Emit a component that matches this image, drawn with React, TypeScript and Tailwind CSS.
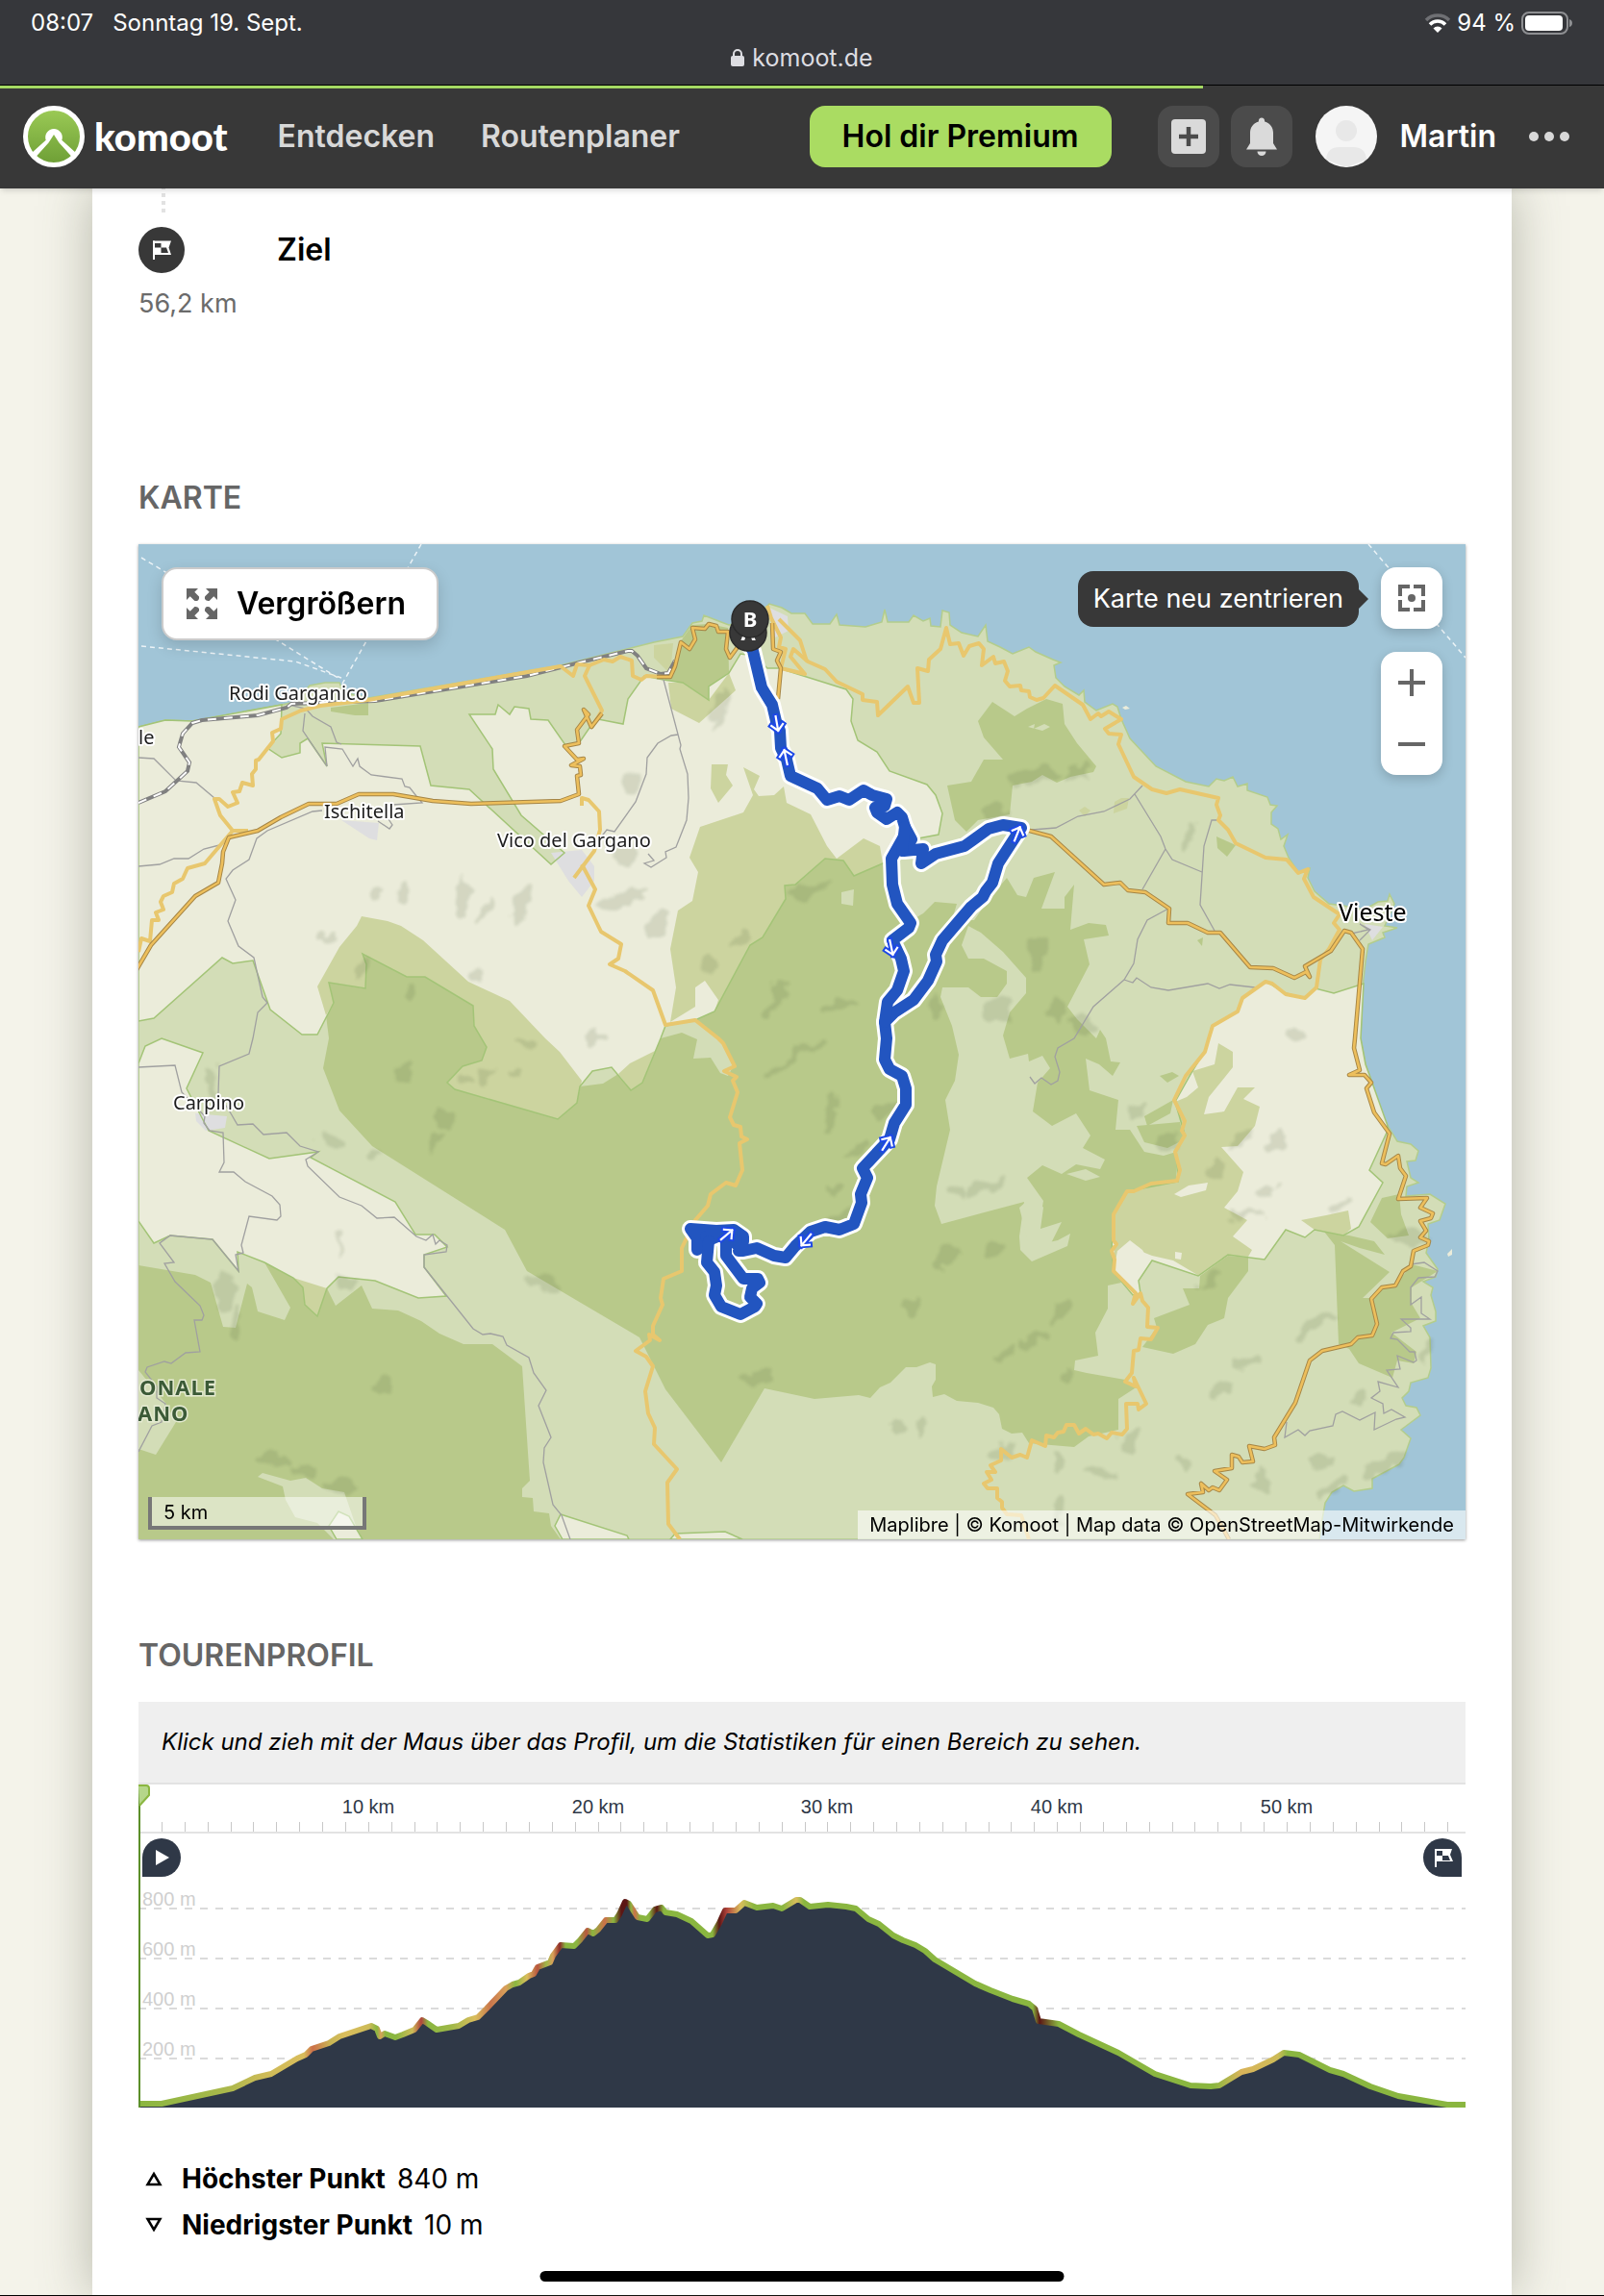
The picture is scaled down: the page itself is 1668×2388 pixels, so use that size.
import { Fragment } from "react";

const land =
  "0,190 28,183 56,184 149,167 163,164 178,147 194,144 209,144 213,154 239,160 439,126 516,107 536,102 566,96 576,82 586,80 588,74 606,81 614,84 640,78 656,62 669,66 679,72 693,72 701,83 719,83 726,73 729,84 756,86 773,81 776,68 779,81 801,81 806,74 816,80 823,77 824,85 834,86 836,69 843,71 844,84 856,92 873,96 881,84 883,101 896,107 909,114 926,107 933,112 951,120 959,123 952,126 954,139 963,148 978,157 983,152 984,164 996,173 1013,166 1018,169 1022,182 1031,202 1058,231 1089,247 1113,252 1121,244 1129,246 1138,242 1143,252 1153,249 1153,256 1174,263 1177,271 1184,272 1178,279 1178,291 1185,296 1188,307 1195,302 1191,314 1196,326 1206,341 1218,337 1216,347 1223,361 1238,374 1253,376 1275,380 1289,372 1299,371 1301,364 1306,374 1296,397 1309,399 1294,404 1296,409 1279,416 1276,434 1273,461 1271,514 1276,541 1284,563 1289,582 1299,605 1309,621 1323,624 1331,631 1328,641 1319,642 1323,659 1331,664 1319,668 1318,678 1343,676 1359,686 1353,703 1341,707 1342,724 1339,737 1351,754 1349,762 1336,767 1346,773 1344,781 1349,798 1349,808 1336,813 1343,825 1344,857 1341,867 1323,872 1321,881 1314,888 1318,896 1329,898 1333,906 1313,921 1323,930 1316,950 1311,957 1283,972 1283,982 1264,985 1253,979 1241,986 1234,997 1231,1014 1228,1035 0,1035";

const forests = [
  "198,456 236,462 237,437 233,426 279,450 298,450 348,480 349,501 362,523 357,537 337,543 321,560 329,567 436,598 456,581 459,564 483,561 499,551 512,568 524,560 543,514 548,501 581,494 599,486 636,417 649,409 673,369 672,355 683,354 714,327 733,329 744,345 774,332 782,360 799,394 816,384 828,372 851,374 846,391 869,391 886,367 903,347 914,365 923,367 931,347 953,341 939,379 963,379 963,367 973,354 971,377 969,401 988,394 1006,396 1009,407 983,411 989,437 966,481 976,494 996,514 1000,505 1006,514 1011,538 1021,539 1013,553 999,541 985,535 989,568 1019,578 1016,609 1031,609 1046,632 1066,636 1079,632 1079,663 1028,673 1014,697 1013,734 1014,757 1022,768 1008,771 1008,795 995,820 998,844 974,849 973,859 986,862 1026,869 1039,876 1019,889 1019,921 988,928 973,939 926,935 919,924 908,925 898,920 895,905 889,898 873,893 851,891 838,884 826,887 825,876 829,869 829,853 823,851 809,856 798,856 782,872 771,877 761,888 749,885 703,889 651,878 606,955 548,879 521,825 516,822 404,756 381,713 243,626 209,589 192,545 198,514 195,490 203,477",
  "888,164 911,179 924,171 944,161 961,166 963,187 976,207 996,231 993,237 969,242 955,248 940,240 929,247 909,251 906,281 873,287 861,299 849,287 841,251 866,247 879,224 899,224 879,201 873,184",
  "1154,742 1154,756 1133,784 1129,805 1112,812 1099,832 1076,842 1044,835 1059,815 1056,805 1093,791 1086,774 1103,774 1104,761 1133,740",
  "1233,715 1259,719 1285,725 1296,739 1270,732 1250,725 1301,757 1273,784 1281,784 1293,773 1307,771 1324,749 1351,756 1324,773 1324,790 1333,805 1303,820 1329,840 1326,852 1309,849 1304,867 1269,852 1259,837 1248,832 1244,729",
  "1293,680 1311,676 1313,697 1321,719 1299,722 1281,705",
  "576,84 593,83 613,87 614,134 593,162 566,144 546,141 556,137 563,102",
  "1046,595 1076,578 1073,592 1049,605",
  "1038,605 1083,601 1088,619 1070,628 1046,622",
  "1062,553 1075,549 1082,553 1070,560",
  "0,750 59,760 75,768 88,814 101,815 113,769 118,773 124,798 152,807 158,794 131,747 196,774 205,792 232,771 243,795 270,797 294,808 313,821 338,832 368,832 399,855 407,974 399,982 399,991 410,992 411,1006 427,1008 429,1021 439,1035 0,1035",
  "200,170 239,165 239,178 225,178 200,174",
  "1121,304 1141,313 1132,325 1122,316",
  "1101,412 1107,409 1106,418",
];

const clearings = [
  "863,397 876,404 899,424 923,451 923,467 906,487 899,511 906,535 925,530 926,538 940,532 948,545 935,560 930,590 950,605 975,592 990,615 982,628 1005,640 1000,650 975,645 960,655 940,646 924,659 941,683 933,729 956,724 969,717 966,730 929,746 917,734 916,720 921,684 835,707 828,688 830,668 844,609 839,578 849,558 853,531 846,501 834,471 836,461 863,461 876,471 893,471 903,457 903,444 879,431 863,431 856,417",
  "548,501 579,496 603,514 620,540 613,553 605,550 595,534 577,535 581,515 565,508 543,514",
  "0,859 28,893 39,913 18,947 0,941",
  "124,970 129,966 158,974 174,971 191,982 214,986 226,1021 233,1035 203,1035 186,1018 163,1012 153,994 150,980",
  "731,362 744,359 743,376 731,374",
  "925,190 932,187 931,192 942,187 948,190 940,194",
  "965,655 985,650 1000,658 985,662",
  "916,690 932,676 941,690 938,712 960,705 945,735 925,725",
];

const plains = [
  "0,190 28,183 56,184 149,167 148,197 134,212 149,222 168,217 168,207 176,202 196,231 191,207 293,210 304,251 344,255 429,333 443,321 398,282 369,234 368,213 344,177 371,177 374,167 386,177 391,169 406,171 408,182 426,183 444,209 458,207 469,191 478,182 504,187 509,161 526,137 546,141 566,144 593,162 593,148 614,134 626,114 640,116 654,129 666,129 736,151 743,161 741,184 748,204 768,216 781,236 820,250 829,261 836,280 832,302 811,306 774,332 744,345 733,329 714,327 683,354 672,355 673,369 649,409 636,417 599,486 581,494 548,501 543,514 524,560 512,568 492,544 472,548 459,564 456,581 436,598 329,567 321,560 337,543 357,537 362,523 349,501 348,480 298,450 279,450 233,426 237,437 236,462 198,456 203,477 186,510 170,510 137,484 119,433 98,436 87,430 16,493 0,496",
  "24,514 67,529 50,566 73,610 136,639 187,632 179,638 267,684 288,718 308,718 321,731 297,739 297,752 320,782 291,784 246,766 208,762 196,774 186,803 173,791 171,773 161,763 131,747 103,736 104,756 77,723 33,719 16,727 0,704 0,540 7,522",
  "1113,514 1116,501 1143,486 1148,472 1173,455 1193,467 1213,472 1224,462 1243,467 1274,457 1271,514 1276,541 1284,563 1299,605 1298,612 1280,651 1294,664 1269,710 1253,719 1223,713 1213,721 1193,713 1171,744 1133,739 1102,761 1054,745 1040,766 1042,779 1034,781 1014,757 1012,734 1014,697 1028,673 1081,663 1079,632 1088,614 1078,580 1096,548 1110,525",
  "208,1006 219,1011 233,1035 206,1035 198,1021",
  "439,1009 508,1031 510,1035 441,1035 433,1021",
  "553,1035 558,1029 610,1027 628,1035",
];

const groves = [
  "232,387 259,392 273,397 296,412 343,455 386,475 423,514 438,528 461,558 456,581 436,598 329,567 321,560 337,543 357,537 362,523 349,501 348,480 298,450 279,450 233,426 237,437 236,462 198,456 203,477 195,490 186,460 209,419 227,397",
  "499,551 511,540 537,527 524,560 512,568",
  "671,252 674,269 699,281 716,314 726,327 754,306 771,314 774,332 744,345 733,329 714,327 683,354 672,355 673,369 649,409 636,417 599,486 603,474 589,454 579,461 579,481 553,497 559,461 553,421 561,381 576,371 582,341 573,326 584,294 629,279 639,261 629,232 646,241 640,255 645,262 661,261",
  "596,229 613,229 611,240 618,251 603,269 595,254",
  "551,144 566,144 593,162 614,134 621,152 583,186 554,171",
  "161,763 196,774 186,803 173,791 171,773",
  "1123,519 1138,528 1138,544 1113,575 1108,593 1129,590 1143,565 1161,565 1149,577 1166,585 1161,605 1143,626 1126,627 1149,653 1143,673 1129,690 1153,703 1138,720 1158,734 1154,741 1133,740 1103,761 1076,745 1054,740 1029,730 1015,744 1014,697 1028,673 1081,663 1079,632 1088,614 1078,580 1090,575 1102,565 1096,548 1119,541",
  "1209,703 1235,698 1258,693 1261,712 1253,719 1223,713",
  "536,105 556,103 553,135 536,118",
  "1015,268 1022,264 1030,264 1028,275 1014,280",
  "978,277 984,273 990,277 984,283",
];

const sandyHoles = ["1077,676 1092,667 1112,664 1110,672 1084,679", "1018,735 1031,724 1044,734 1052,748 1040,766 1040,779 1014,756", "1078,736 1085,737 1084,744 1078,743"];

const towns = ["211,287 250,290 248,308 240,306", "429,321 461,318 474,335 474,350 461,367 447,350", "59,592 92,595 90,607 70,610 60,600", "656,66 675,75 676,90 662,97", "1275,395 1294,398 1283,412"];

const yellowRoads = [
  "0,424 3,410 12,413 14,391 21,391 18,383 26,380 23,372 26,366 35,362 37,353 46,348 51,337 69,332 98,298 85,282 79,265 84,265 93,273 103,269 98,258 105,257 108,248 119,251 118,239 122,234 122,225 125,224 140,205 139,196 148,192 149,182 169,173 189,168 239,162 439,127 452,137 456,125 469,126 484,120 493,122 501,117 513,121 514,137 523,141 528,137 546,138",
  "98,298 114,298",
  "469,126 464,137 482,173 471,191",
  "654,64 658,77 668,97 666,107 673,109 668,129 693,135 678,117 681,109 696,122 714,130 726,143 753,156 753,162 768,164 769,178 800,148 806,165 812,165 810,129 821,132 822,120 834,109 840,87 844,104 853,103 858,116 864,106 874,103 879,109 877,126 889,117 891,124 900,122 904,132 901,142 906,148 917,147 918,152 926,153 927,159 934,162 941,160 953,147 982,167 990,182 998,176 1001,179 1009,174 1022,182 1005,192 1009,197 1022,198 1019,208 1035,242 1054,255 1069,259 1083,255 1123,264 1121,271 1125,282 1123,287 1133,297 1141,311 1172,326 1194,328 1206,342 1216,338 1212,348 1222,367 1249,385 1243,394 1249,401 1238,421 1229,432 1225,461 1213,472 1193,468 1179,457 1172,455 1148,472 1143,486 1117,501 1113,514 1109,528 1089,553 1077,578 1088,600 1085,610 1088,615 1078,632 1083,651 1080,662 1053,665 1035,673 1028,673 1014,697 1014,724 1017,728 1012,735 1015,744 1014,756 1037,779 1034,790 1042,779 1044,787 1050,794 1049,814 1060,815 1053,827 1042,826 1040,838 1035,839 1033,862 1026,871 1037,876 1035,867 1048,894 1040,900 1039,894 1027,894 1028,920 1023,926 1012,924 1007,930 998,925 993,926 985,920 978,925 973,916 965,916 962,923 956,924 952,929 944,927 943,938 929,932 924,950 917,947 908,950 897,941 897,953 886,958 891,965 882,965 887,973 879,977 883,982 893,982 893,992 898,996 898,1002 903,1009 918,1010 926,1035",
  "666,78 688,100 695,122",
  "461,272 461,264 468,266 479,278 480,297 474,319 453,347",
  "461,333 475,359 468,376 481,403 502,416 499,431 490,437 506,444 535,464 548,500 579,495 603,514 608,519 620,543 609,548 622,554 618,558 623,570 615,596 619,604 626,606 627,616 633,619 625,623 628,651 621,667 611,664 595,676 592,688 579,703 565,732 565,756 546,764 543,784 545,791 535,813 535,822 542,828 531,822 532,828 517,839 528,845 535,855 527,881 530,904 537,919 536,936 560,962 550,976 551,1019 563,1035",
];

const mainRoads = [
  "539,138 553,138 558,127 564,102 573,109 579,99 576,87 589,88 593,83 601,85 603,91 613,91 611,109 615,118 623,107",
  "659,82 660,109 668,112 664,121 668,129 665,161",
  "482,176 471,190 463,172 468,177 456,193 458,207 443,210 456,224 463,223 450,230 459,231 460,240 456,241 458,260 439,267 346,270 306,267 265,260 229,260 206,270 177,270 148,284 124,298 94,305 88,320 87,332 83,352 59,366 13,417 -4,446",
  "923,297 949,304 1004,354 1021,352 1029,360 1047,362 1072,379 1071,394 1091,394 1112,404 1125,404 1156,440 1180,441 1202,451 1214,445 1218,450 1213,439 1240,423 1254,402 1261,404 1273,421 1265,514 1264,524 1270,547 1259,552 1275,552 1282,560 1277,566 1285,591 1301,613 1293,644 1297,645 1310,636 1312,649 1318,657 1310,681 1340,680 1333,690 1346,696 1344,701 1333,704 1339,714 1333,721 1342,725 1341,729 1326,735 1323,751 1315,756 1307,771 1293,773 1282,785 1288,811 1283,823 1268,825 1261,832 1231,839 1218,849 1203,893 1181,929 1182,937 1171,941 1155,938 1159,954 1148,955 1144,949 1137,947 1137,961 1119,964 1132,973 1124,984 1117,981 1113,984 1105,977 1107,986 1091,988 1120,1010 1134,1035",
];

const greyRoads = [
  "0,222 16,223 39,246 60,248 79,264",
  "0,335 22,333 37,327 52,327 68,317 84,313",
  "191,277 181,278 134,298 123,306 115,328 98,339 91,348 101,370 93,392 104,418 120,430 129,471 134,477 124,487 119,514 115,530 84,543 83,571 96,592 103,604 119,603 130,614 154,612 168,626 187,632 174,640 176,647 209,679 232,688 248,701 266,700 289,720 299,724 306,718 309,728 313,724 321,729 320,736 297,739 297,752 348,816 358,822 366,821 379,824 383,833 406,846 411,862 424,880 416,896 429,929 422,940 421,955 431,999 440,1010 449,1035",
  "0,544 38,542 45,570 69,595 68,602 74,610 88,612 89,643 84,653 99,653 111,663 139,678 147,687 148,699 144,703 115,699 107,729 109,737 101,739 104,756 77,723 33,719 22,727 37,747 27,748 38,767 64,792 68,802 66,807 58,807 64,840 49,841 34,852 27,850 9,856 7,861 19,876 19,888 28,894 24,913 14,917 0,944",
  "173,176 171,194 196,231 194,211 212,213 223,231 228,223 230,231 242,240 274,244 277,252 282,253 289,262 295,269 264,271",
  "156,167 174,171 181,179 200,190 206,206 211,208",
  "249,288 261,296 264,292 260,286",
  "546,141 564,209 563,213 571,239 572,264 570,287 559,315 548,320 549,326 533,336 526,332 536,329 530,322",
  "561,198 554,199 540,207 529,222 528,239 517,268 495,299 487,297 480,306",
  "929,297 954,295 977,283 1004,278 1031,265 1044,251",
  "1036,260 1063,304 1068,317 1075,328 1106,341",
  "1068,317 1044,359",
  "1123,287 1116,287 1108,314 1104,375 1119,402",
  "1071,379 1049,391 1039,411 1035,436 1025,453 993,481 973,514 956,524 953,533 958,549 956,558 949,562 939,555 932,561 927,554",
  "1025,453 1034,456 1038,451 1053,461 1071,464 1112,457 1124,462 1135,458 1161,461",
  "1323,749 1337,747 1351,756 1348,762 1331,763 1323,773 1323,791 1334,783 1334,800 1343,806 1313,806 1323,815 1323,819 1305,820 1302,826 1309,827 1322,840 1327,840 1329,849 1326,851 1309,844 1312,858 1298,859 1310,877 1289,871 1291,881 1282,888 1294,894 1295,904 1303,900 1317,908 1308,910 1285,921 1286,903 1270,911 1252,902 1245,905 1242,917 1218,922 1213,927 1206,921 1192,929 1194,913",
  "1261,405 1279,401 1270,395 1281,401 1270,412",
];

const railway = "0,269 28,257 51,236 53,227 42,211 46,197 56,186 66,183 124,178 154,170 159,166 246,163 404,137 463,122 509,111 513,111 519,116 528,129 543,135 551,134 558,121";

const ferries = [
  "3,14 60,48 209,140",
  "3,106 163,122 211,139",
  "294,0 212,145",
  "1279,0 1380,118",
];

const route = [
  "632,100 639,111 648,149 651,154 659,167 663,184 667,194 668,212 674,224 678,241 706,254 716,266 729,262 739,266 754,256 763,261 778,265 776,272 766,274 768,279 778,286 789,279 794,284 797,294 804,307 796,319 816,317 814,332 829,322 859,314 884,296 899,292 918,295 894,332 888,352 881,361 878,367 866,377 836,412 829,427 830,434 821,454 806,474 786,487 776,497 778,514 776,536 781,546 794,553 798,566 798,583 786,602 781,619 753,649 758,659 751,676 752,685 744,707 729,713 714,710 699,715 683,730 673,742 661,740 643,732 629,735 624,735 629,725 629,720 619,713 601,714 574,712 581,722 581,734 593,724 609,717 624,730",
  "796,304 783,327 784,354 789,374 803,394 801,399 784,412 793,431 796,444 789,464 779,476 776,497",
  "797,294 794,319",
  "590,720 606,720 622,724",
  "593,725 591,747 599,757 601,771 599,781 606,793 626,801 641,793 643,790 636,783 638,774 646,768 644,764 629,764 611,740 611,720",
];

const arrows = [
  [664, 187, 170],
  [673, 221, -12],
  [783, 420, 168],
  [914, 301, 22],
  [778, 623, 32],
  [694, 724, 220],
  [612, 718, 50],
];

// hill shading: x, y, rx, ry, rotation
const hills = [
  [274, 361, 5, 12, 20], [336, 366, 7, 20, 8], [362, 380, 4, 14, 25], [400, 372, 9, 22, 20], [248, 363, 5, 8, 35],
  [196, 411, 10, 5, -35], [231, 442, 12, 6, -40], [283, 468, 7, 6, 0], [350, 450, 6, 9, 40], [490, 372, 10, 5, -10],
  [510, 366, 24, 7, -25], [505, 320, 12, 14, 20], [515, 250, 8, 14, 20], [605, 170, 6, 22, 10], [540, 395, 8, 18, 35],
  [595, 440, 10, 8, -40], [664, 470, 6, 22, 32], [727, 480, 18, 5, -15], [625, 410, 14, 7, -30], [700, 360, 24, 6, -15],
  [670, 540, 24, 5, -35], [700, 524, 18, 4, -15], [720, 590, 5, 22, 15], [774, 588, 12, 8, -30], [750, 630, 14, 7, -40],
  [725, 670, 10, 6, 0], [730, 700, 22, 4, -20], [880, 668, 22, 6, -15], [850, 675, 8, 6, 0], [890, 735, 12, 8, -40],
  [840, 740, 14, 9, -40], [960, 800, 5, 16, 25], [930, 828, 18, 6, -25], [900, 842, 10, 5, -30], [965, 866, 9, 5, 0],
  [805, 790, 5, 11, 25], [640, 868, 16, 6, 0], [275, 552, 10, 9, -40], [318, 596, 10, 8, -30], [310, 622, 5, 12, 30],
  [200, 620, 14, 7, 10], [244, 634, 7, 6, -30], [363, 551, 9, 6, -20], [340, 556, 7, 5, 0], [390, 552, 7, 4, 0],
  [90, 778, 10, 22, 0], [103, 808, 6, 16, 8], [76, 560, 5, 20, 0], [255, 876, 8, 10, 30], [140, 952, 15, 6, 10],
  [170, 963, 16, 6, 10], [205, 980, 18, 7, 10], [216, 768, 6, 9, 30], [210, 730, 3, 14, 0], [420, 768, 18, 6, 12],
  [1147, 618, 16, 6, -38], [1122, 650, 8, 7, -30], [1181, 620, 6, 14, 25], [1174, 673, 10, 5, -20], [1150, 695, 18, 5, 0],
  [1070, 622, 12, 8, -30], [1038, 590, 12, 8, -30], [1225, 808, 20, 7, -18], [1212, 818, 6, 12, 0], [1155, 850, 16, 6, -20],
  [1125, 880, 12, 8, -30], [1270, 886, 12, 5, -25], [1340, 840, 6, 12, 20], [1295, 958, 26, 7, -28], [1242, 980, 16, 6, -35],
  [1300, 955, 22, 4, -30], [1238, 984, 12, 4, -45],
  [1320, 720, 20, 7, 0], [1115, 765, 14, 6, -30], [1230, 955, 14, 7, 0], [1170, 975, 10, 12, 0], [1085, 955, 9, 8, 0],
  [1000, 965, 16, 8, 0], [958, 958, 5, 12, 10], [958, 1005, 5, 18, 0], [1030, 935, 12, 10, 0], [898, 943, 16, 9, -10],
  [790, 918, 7, 9, 0], [812, 918, 6, 10, 10], [930, 242, 26, 7, -10], [976, 236, 18, 6, -20], [980, 500, 14, 10, -30],
  [890, 280, 12, 8, 0], [955, 485, 8, 10, 0], [1092, 308, 5, 18, 10], [1204, 510, 8, 6, 0], [935, 425, 8, 16, 10],
  [474, 514, 10, 6, -35], [402, 519, 10, 5, 0], [830, 480, 10, 10, 0], [893, 485, 16, 12, -20], [1250, 690, 12, 5, -10],
];

const profile =
  "0,334 24,334 98,318 121,307 138,303 165,287 174,283 180,277 198,271 209,264 242,253 248,256 251,264 256,261 267,265 275,262 287,257 295,247 300,250 310,257 333,253 343,247 353,244 362,235 382,214 389,210 396,208 406,201 411,199 415,192 428,187 431,180 439,169 453,170 459,164 467,154 473,157 478,153 486,143 496,143 500,137 506,124 510,126 519,140 529,142 537,132 544,130 548,135 560,137 575,144 592,159 597,158 604,146 610,133 621,133 630,125 643,130 660,128 669,131 684,122 688,122 698,129 717,127 736,129 746,131 759,142 770,147 785,159 795,164 808,169 818,175 828,184 870,209 886,216 909,225 926,230 932,235 936,248 957,251 978,262 1019,281 1057,303 1094,315 1115,316 1124,315 1147,301 1159,298 1180,288 1191,281 1207,283 1239,299 1253,303 1281,316 1310,326 1361,335 1380,335";

const slopes: [number, string][] = [
  [0, "#8ab640"], [90, "#a9b84b"], [130, "#cdbb58"], [172, "#d9bd5c"], [181, "#cc7049"], [200, "#c9b655"], [215, "#d9bd5c"],
  [240, "#cdbb58"], [248, "#8ab640"], [252, "#d9a05a"], [257, "#8ab640"], [268, "#8ab640"], [285, "#cdbb58"], [294, "#b1443c"],
  [301, "#8ab640"], [325, "#9fb848"], [350, "#d9bd5c"], [366, "#c9764c"], [382, "#d9a05a"], [392, "#8ab640"], [404, "#d9bd5c"],
  [415, "#b9553f"], [424, "#9fb848"], [431, "#d9a05a"], [438, "#8c2a28"], [444, "#8ab640"], [456, "#8ab640"], [466, "#b9553f"],
  [472, "#8ab640"], [485, "#cc7049"], [494, "#8ab640"], [502, "#5c1614"], [508, "#5c1614"], [512, "#8ab640"], [516, "#cc7049"],
  [522, "#8ab640"], [531, "#8ab640"], [539, "#5c1614"], [546, "#8ab640"], [597, "#8ab640"], [604, "#5c1614"], [612, "#b1443c"],
  [626, "#d9bd5c"], [640, "#8ab640"], [670, "#8ab640"], [684, "#d9bd5c"], [692, "#8ab640"], [930, "#8ab640"], [937, "#5c1614"],
  [957, "#8ab640"], [1118, "#8ab640"], [1147, "#d9b45a"], [1185, "#cdbb58"], [1195, "#8ab640"], [1380, "#8ab640"],
];

const KM = 23.88;

function FlagIcon({ className }: { className?: string }) {
  return (
    <svg viewBox="0 0 20 20" className={className} aria-hidden="true">
      <path d="M2 0.500V20" stroke="#fff" strokeWidth="2" />
      <path d="M1 0.500H20L17.500 7.500L20 15H1Z" fill="#fff" />
      <path d="M3 3H9.500V7.500H3ZM9.500 7.500H15L17 13H9.500Z" fill="#383838" />
    </svg>
  );
}

function StatusBar() {
  return (
    <div className="relative flex h-[88px] justify-between bg-[#36373b] px-8 pt-2 text-[24px] leading-8 text-white">
      <div className="flex gap-5">
        <span>08:07</span>
        <span>Sonntag 19. Sept.</span>
      </div>
      <div className="absolute inset-x-0 top-11 flex items-center justify-center gap-2 text-[25px] text-[#dddde2]">
        <svg viewBox="0 0 14 18" className="h-[18px] w-[14px]" aria-hidden="true">
          <rect y="7" width="14" height="11" rx="2" fill="currentColor" />
          <path d="M3 8V5a4 4 0 0 1 8 0v3" fill="none" stroke="currentColor" strokeWidth="2" />
        </svg>
        <span>komoot.de</span>
      </div>
      <div className="flex h-8 items-center gap-1.5">
        <svg viewBox="0 0 28 20" className="h-5 w-7" fill="none" aria-hidden="true">
          <path d="M2 7A17 17 0 0 1 26 7" stroke="#6f7074" strokeWidth="3.500" />
          <path d="M6 11.500A11 11 0 0 1 22 11.500" stroke="#fff" strokeWidth="3.500" />
          <path d="M14 20L9.500 15.500A6 6 0 0 1 18.500 15.500Z" fill="#fff" />
        </svg>
        <span>94 %</span>
        <svg viewBox="0 0 54 24" className="h-6 w-[54px]" aria-hidden="true">
          <rect x="1" y="1" width="47" height="22" rx="7" fill="none" stroke="#8e8f92" strokeWidth="2" />
          <rect x="4" y="4" width="39" height="16" rx="4" fill="#fff" />
          <path d="M50 8Q53 9 53 12Q53 15 50 16Z" fill="#8e8f92" />
        </svg>
      </div>
    </div>
  );
}

function Header() {
  return (
    <header className="relative z-10 border-t border-black bg-[#383838] shadow-md">
      <div className="absolute left-0 top-0 h-[3px] w-3/4 bg-[#a5d963]" />
      <div className="flex h-[107px] items-center pl-6 pr-9 pb-0.5 text-[32px] font-semibold">
        <a href="#" className="flex items-center gap-2.5 text-white">
          <svg viewBox="0 0 64 64" className="size-16" aria-hidden="true">
            <defs>
              <linearGradient id="logo" x1="0" y1="0" x2="0" y2="1">
                <stop offset="0" stopColor="#9ccb56" />
                <stop offset="1" stopColor="#6d9e35" />
              </linearGradient>
            </defs>
            <circle cx="32" cy="32" r="29.500" fill="url(#logo)" stroke="#fff" strokeWidth="5" />
            <path d="M9 49L23.700 35.700A8.800 8.800 0 1 1 40.300 35.700L55 49L51 53.500L37.300 38.300L32 30L26.700 38.300L13 53.500Z" fill="#fff" />
          </svg>
          <span className="font-['Lato'] text-[40px] font-black leading-10">komoot</span>
        </a>
        <nav className="ml-[52px] flex gap-12 text-[#d8d8d8]">
          <a href="#">Entdecken</a>
          <a href="#">Routenplaner</a>
        </nav>
        <button className="ml-auto h-16 rounded-2xl bg-[#aadc62] px-[34px] text-black">Hol dir Premium</button>
        <div className="ml-12 flex gap-3">
          <button aria-label="Neu" className="flex size-16 items-center justify-center rounded-2xl bg-[#4b4b4b]">
            <svg viewBox="0 0 36 36" className="size-9">
              <rect width="36" height="36" rx="4" fill="#dadada" />
              <path d="M18 8V28M8 18H28" stroke="#4b4b4b" strokeWidth="4.500" />
            </svg>
          </button>
          <button aria-label="Mitteilungen" className="flex size-16 items-center justify-center rounded-2xl bg-[#4b4b4b]">
            <svg viewBox="0 0 32 40" className="h-10 w-8" fill="#dadada">
              <path d="M16 0.500C18 0.500 19.200 2 19.200 4.500C25 6 28 11 28 16V27L32 33.500H0L4 27V16C4 11 7 6 12.800 4.500C12.800 2 14 0.500 16 0.500Z" />
              <path d="M11.500 35.500H20.500A4.500 4.500 0 0 1 11.500 35.500Z" />
            </svg>
          </button>
        </div>
        <a href="#" className="ml-6 flex items-center gap-6 text-white">
          <svg viewBox="0 0 64 64" className="size-16 rounded-full" aria-hidden="true">
            <rect width="64" height="64" fill="#f5f5f5" />
            <circle cx="32" cy="26" r="11" fill="#e8e8e8" />
            <path d="M11 56Q12 43 25 43H39Q52 43 53 56L32 64Z" fill="#e8e8e8" />
          </svg>
          <span>Martin</span>
        </a>
        <button aria-label="Mehr" className="ml-[34px] flex gap-1.5">
          <span className="size-2.5 rounded-full bg-[#d8d8d8]" />
          <span className="size-2.5 rounded-full bg-[#d8d8d8]" />
          <span className="size-2.5 rounded-full bg-[#d8d8d8]" />
        </button>
      </div>
    </header>
  );
}

function MapDrawing() {
  return (
    <svg viewBox="0 0 1380 1035" className="block w-full bg-[#a1c5d7] font-['Noto_Sans',sans-serif]">
      <defs>
        <filter id="relief" x="-5%" y="-5%" width="110%" height="110%">
          <feTurbulence type="fractalNoise" baseFrequency="0.060" numOctaves="2" seed="4" />
          <feDisplacementMap in="SourceGraphic" scale="22" xChannelSelector="R" yChannelSelector="G" />
          <feGaussianBlur stdDeviation="1.500" />
        </filter>
      </defs>
      <g fill="none" stroke="#fff" strokeWidth="1.500" strokeDasharray="5 4" opacity="0.800">
        {ferries.map((p) => <polyline key={p} points={p} />)}
      </g>
      <polygon points={land} fill="#d3ddb7" stroke="#b3cd8c" strokeWidth="1.500" />
      <g fill="#b8c98a">{forests.map((p) => <polygon key={p} points={p} />)}</g>
      <g fill="#d3ddb7">{clearings.map((p) => <polygon key={p} points={p} />)}</g>
      <g fill="#ebecda">{plains.map((p) => <polygon key={p} points={p} />)}</g>
      <g fill="#ccd49f">{groves.map((p) => <polygon key={p} points={p} />)}</g>
      <g fill="#ebecda">{sandyHoles.map((p) => <polygon key={p} points={p} />)}</g>
      <g fill="#dedee0">{towns.map((p) => <polygon key={p} points={p} />)}</g>
      <g fill="none" stroke="#a3c477" strokeWidth="1.500">{plains.map((p) => <polygon key={p} points={p} />)}</g>
      <g fill="#4f5f3a" opacity="0.150" filter="url(#relief)">
        {hills.map(([x, y, rx, ry, r]) => (
          <ellipse key={`${x}-${y}`} cx={x} cy={y} rx={rx} ry={ry} transform={`rotate(${r} ${x} ${y})`} />
        ))}
      </g>
      <g fill="#ebecda">
        <path d="M1023 170l4 -2l4 3l-5 1z M1361 738l5 -5v6l-4 2z" />
      </g>
      <g fill="none" stroke="#a0a0a0" strokeWidth="1.300">{greyRoads.map((p) => <polyline key={p} points={p} />)}</g>
      <polyline points={railway} fill="none" stroke="#808080" strokeWidth="4" />
      <polyline points={railway} fill="none" stroke="#fff" strokeWidth="2" strokeDasharray="9 8" />
      <g fill="none" stroke="#e8c76e" strokeWidth="4" strokeLinejoin="round">{yellowRoads.map((p) => <polyline key={p} points={p} />)}</g>
      <g fill="none" stroke="#a58545" strokeWidth="4.500" strokeLinejoin="round">{mainRoads.map((p) => <polyline key={p} points={p} />)}</g>
      <g fill="none" stroke="#edbf5c" strokeWidth="2.600" strokeLinejoin="round">{mainRoads.map((p) => <polyline key={p} points={p} />)}</g>
      <g fontSize="20" fill="#1c1c1c" stroke="#fff" strokeWidth="4" strokeLinejoin="round" style={{ paintOrder: "stroke" }}>
        <text x="94" y="162">Rodi Garganico</text>
        <text x="0" y="208">le</text>
        <text x="193" y="285">Ischitella</text>
        <text x="373" y="315">Vico del Gargano</text>
        <text x="36" y="588">Carpino</text>
        <text x="1248" y="392" fontSize="25" fill="#000">Vieste</text>
      </g>
      <g fontSize="22" fontWeight="700" letterSpacing="1" fill="#3b5a37" stroke="#e4ead2" strokeWidth="3" style={{ paintOrder: "stroke" }}>
        <text x="1" y="885">ONALE</text>
        <text x="-1" y="912">ANO</text>
      </g>
      <g fill="none" stroke="#fff" strokeWidth="18" strokeLinejoin="round" strokeLinecap="round">{route.map((p) => <polyline key={p} points={p} />)}</g>
      <g fill="none" stroke="#2255c0" strokeWidth="12" strokeLinejoin="round" strokeLinecap="round">{route.map((p) => <polyline key={p} points={p} />)}</g>
      {arrows.map(([x, y, r]) => (
        <g key={x} transform={`translate(${x} ${y}) rotate(${r})`} fill="none" strokeLinecap="square">
          <path d="M0 8V-7M-6 -1L0 -7L6 -1" stroke="#1d48e6" strokeWidth="6" />
          <path d="M0 8V-7M-6 -1L0 -7L6 -1" stroke="#fff" strokeWidth="2.200" />
        </g>
      ))}
      <g fill="#383838" stroke="#2a2a2a" strokeWidth="1.500" textAnchor="middle" fontSize="22" fontWeight="700">
        <circle cx="634" cy="92" r="19" />
        <text x="634" y="100" fill="#fff" stroke="none">A</text>
        <circle cx="636" cy="78" r="19" />
        <text x="636" y="86" fill="#fff" stroke="none">B</text>
      </g>
    </svg>
  );
}

function RouteMap() {
  return (
    <div className="relative mt-7 overflow-hidden shadow-[0_1px_3px_rgba(0,0,0,0.4)]">
      <MapDrawing />
      <button className="absolute left-6 top-6 flex h-[76px] items-center gap-5 rounded-2xl border-2 border-[#cbcbcb] bg-white pl-6 pr-8 text-[32px] font-semibold text-black shadow-[0_6px_16px_rgba(0,0,0,0.15)]">
        <svg viewBox="0 0 32 32" className="size-8" fill="#666" aria-hidden="true">
          {[0, 90, 180, 270].map((r) => (
            <path key={r} transform={`rotate(${r} 16 16)`} d="M0 0H12L8.300 3.700L13 8.400Q13.500 11.500 11 13Q9 13.200 8.200 12.800L3.700 8.300L0 12Z" />
          ))}
        </svg>
        Vergrößern
      </button>
      <div className="absolute right-6 top-6 flex flex-col gap-6">
        <button aria-label="Karte neu zentrieren" className="flex size-16 items-center justify-center rounded-2xl bg-white shadow-[0_4px_12px_rgba(0,0,0,0.18)]">
          <svg viewBox="0 0 28 28" className="size-7" fill="none" stroke="#666" strokeWidth="4">
            <path d="M2 12V2H12M16 2H26V12M26 16V26H16M12 26H2V16" />
            <circle cx="14" cy="14" r="4" fill="#666" stroke="none" />
          </svg>
        </button>
        <div className="flex flex-col rounded-2xl bg-white shadow-[0_4px_12px_rgba(0,0,0,0.18)]">
          <button aria-label="Vergrößern" className="flex size-16 items-center justify-center">
            <svg viewBox="0 0 28 28" className="size-7" stroke="#666" strokeWidth="4"><path d="M14 0V28M0 14H28" /></svg>
          </button>
          <button aria-label="Verkleinern" className="flex size-16 items-center justify-center">
            <svg viewBox="0 0 28 28" className="size-7" stroke="#666" strokeWidth="4"><path d="M0 14H28" /></svg>
          </button>
        </div>
      </div>
      <div role="tooltip" className="absolute right-[111px] top-7 flex h-[58px] items-center rounded-2xl bg-[#383838] px-4 text-[27px] text-white">
        Karte neu zentrieren
        <svg viewBox="0 0 11 22" className="absolute -right-2.5 top-[18px] h-[22px] w-[11px]" fill="#383838" aria-hidden="true">
          <path d="M0 0L11 11L0 22Z" />
        </svg>
      </div>
      <div className="absolute bottom-2.5 left-2.5 h-[34px] w-[227px] border-4 border-t-0 border-[#777] bg-white/50 pl-3 text-[20px] leading-8 text-black">5 km</div>
      <div className="absolute bottom-0 right-0 bg-white/60 px-3 text-[20px] leading-[30px] text-black">
        <a href="#">Maplibre</a> | <a href="#">© Komoot</a> | Map data <a href="#">© OpenStreetMap-Mitwirkende</a>
      </div>
    </div>
  );
}

function ElevationProfile() {
  return (
    <svg viewBox="0 0 1380 338" className="block w-full font-['Liberation_Sans',Arial,sans-serif]">
      <defs>
        <linearGradient id="slope" gradientUnits="userSpaceOnUse" x1="0" y1="0" x2="1380" y2="0">
          {slopes.map(([x, color]) => <stop key={x} offset={x / 1380} stopColor={color} />)}
        </linearGradient>
      </defs>
      <rect width="1380" height="2" fill="#e3e3e3" />
      <rect y="51" width="1380" height="2" fill="#e3e3e3" />
      {Array.from({ length: 57 }, (_, i) => (
        <rect key={i} x={Math.round((i + 1) * KM)} y="41" width="1" height="10" fill="#c8c8c8" />
      ))}
      {[10, 20, 30, 40, 50].map((km) => (
        <text key={km} x={Math.round(km * KM)} y="32" textAnchor="middle" fontSize="20" fill="#2f3847">{km} km</text>
      ))}
      {[800, 600, 400, 200].map((m, i) => (
        <Fragment key={m}>
          <line x1="0" x2="1380" y1={131 + i * 52} y2={131 + i * 52} stroke="#cfcfcf" strokeWidth="1.500" strokeDasharray="8 8" />
          <text x="4" y={128 + i * 52} fontSize="20" fill="#cfcfcf">{m} m</text>
        </Fragment>
      ))}
      <polygon points={`${profile} 1380,338 0,338`} fill="#2f3847" />
      <polyline points={profile} fill="none" stroke="url(#slope)" strokeWidth="6" strokeLinejoin="round" />
      <rect y="2" width="2" height="336" fill="#5c8f2a" />
      <path d="M0 3H8Q11 3 11 6V13L1 24" fill="#b5d68a" stroke="#8ab640" strokeWidth="2" />
      <path d="M4 98V78A20 20 0 1 1 24 98Z" fill="#2f3847" />
      <path d="M18 70V86L32 78Z" fill="#fff" />
      <path d="M1376 98V78A20 20 0 1 0 1356 98Z" fill="#2f3847" />
      <path d="M1349 69V88" stroke="#fff" strokeWidth="2" />
      <path d="M1348 69H1366L1364 75L1367 82H1348Z" fill="#fff" />
      <path d="M1350 71H1356V76H1350ZM1356 76H1362L1364 81H1356Z" fill="#2f3847" />
    </svg>
  );
}

export default function App() {
  return (
    <div className="relative flex min-h-screen flex-col border-b border-black bg-[#f4f3ea] font-['Inter',sans-serif]">
      <StatusBar />
      <Header />
      <main className="mx-24 flex-1 bg-white px-12 text-[28px] leading-8 text-black shadow-[0_0_50px_rgba(90,95,75,0.4)]">
        <section>
          <div className="ml-6 h-[25px] w-1 bg-[repeating-linear-gradient(to_top,#e2e2e2_0_4px,transparent_4px_8px)]" />
          <div className="mt-[15px] flex items-center">
            <span className="flex size-12 items-center justify-center rounded-full bg-[#383838]">
              <FlagIcon className="size-5" />
            </span>
            <h3 className="ml-24 text-[32px] font-semibold">Ziel</h3>
          </div>
          <p className="mt-4 text-[27px] text-[#6b6b6b]">56,2 km</p>
        </section>

        <section className="mt-[166px]">
          <h2 className="text-[32px] font-semibold leading-10 text-[#666]">KARTE</h2>
          <RouteMap />
        </section>

        <section className="mt-[101px]">
          <h2 className="text-[32px] font-semibold leading-10 text-[#666]">TOURENPROFIL</h2>
          <p className="mt-7 h-[84px] bg-[#efefef] px-6 text-[24px] italic leading-[84px]">
            Klick und zieh mit der Maus über das Profil, um die Statistiken für einen Bereich zu sehen.
          </p>
          <ElevationProfile />
          <dl className="mt-[50px]">
            <div className="flex h-12 items-center">
              <svg viewBox="0 0 18 16" className="mx-[7px] h-4 w-[18px]" fill="none" stroke="#000" strokeWidth="2.500" aria-hidden="true">
                <path d="M9 3L15.500 14H2.500Z" />
              </svg>
              <dt className="ml-[13px] font-bold">Höchster Punkt</dt>
              <dd className="ml-3">840 m</dd>
            </div>
            <div className="flex h-12 items-center">
              <svg viewBox="0 0 18 16" className="mx-[7px] h-4 w-[18px]" fill="none" stroke="#000" strokeWidth="2.500" aria-hidden="true">
                <path d="M9 13L15.500 2H2.500Z" />
              </svg>
              <dt className="ml-[13px] font-bold">Niedrigster Punkt</dt>
              <dd className="ml-3">10 m</dd>
            </div>
          </dl>
        </section>
      </main>
      <div className="absolute bottom-3.5 left-1/2 h-[11px] w-[545px] -translate-x-1/2 rounded-full bg-black" />
    </div>
  );
}
